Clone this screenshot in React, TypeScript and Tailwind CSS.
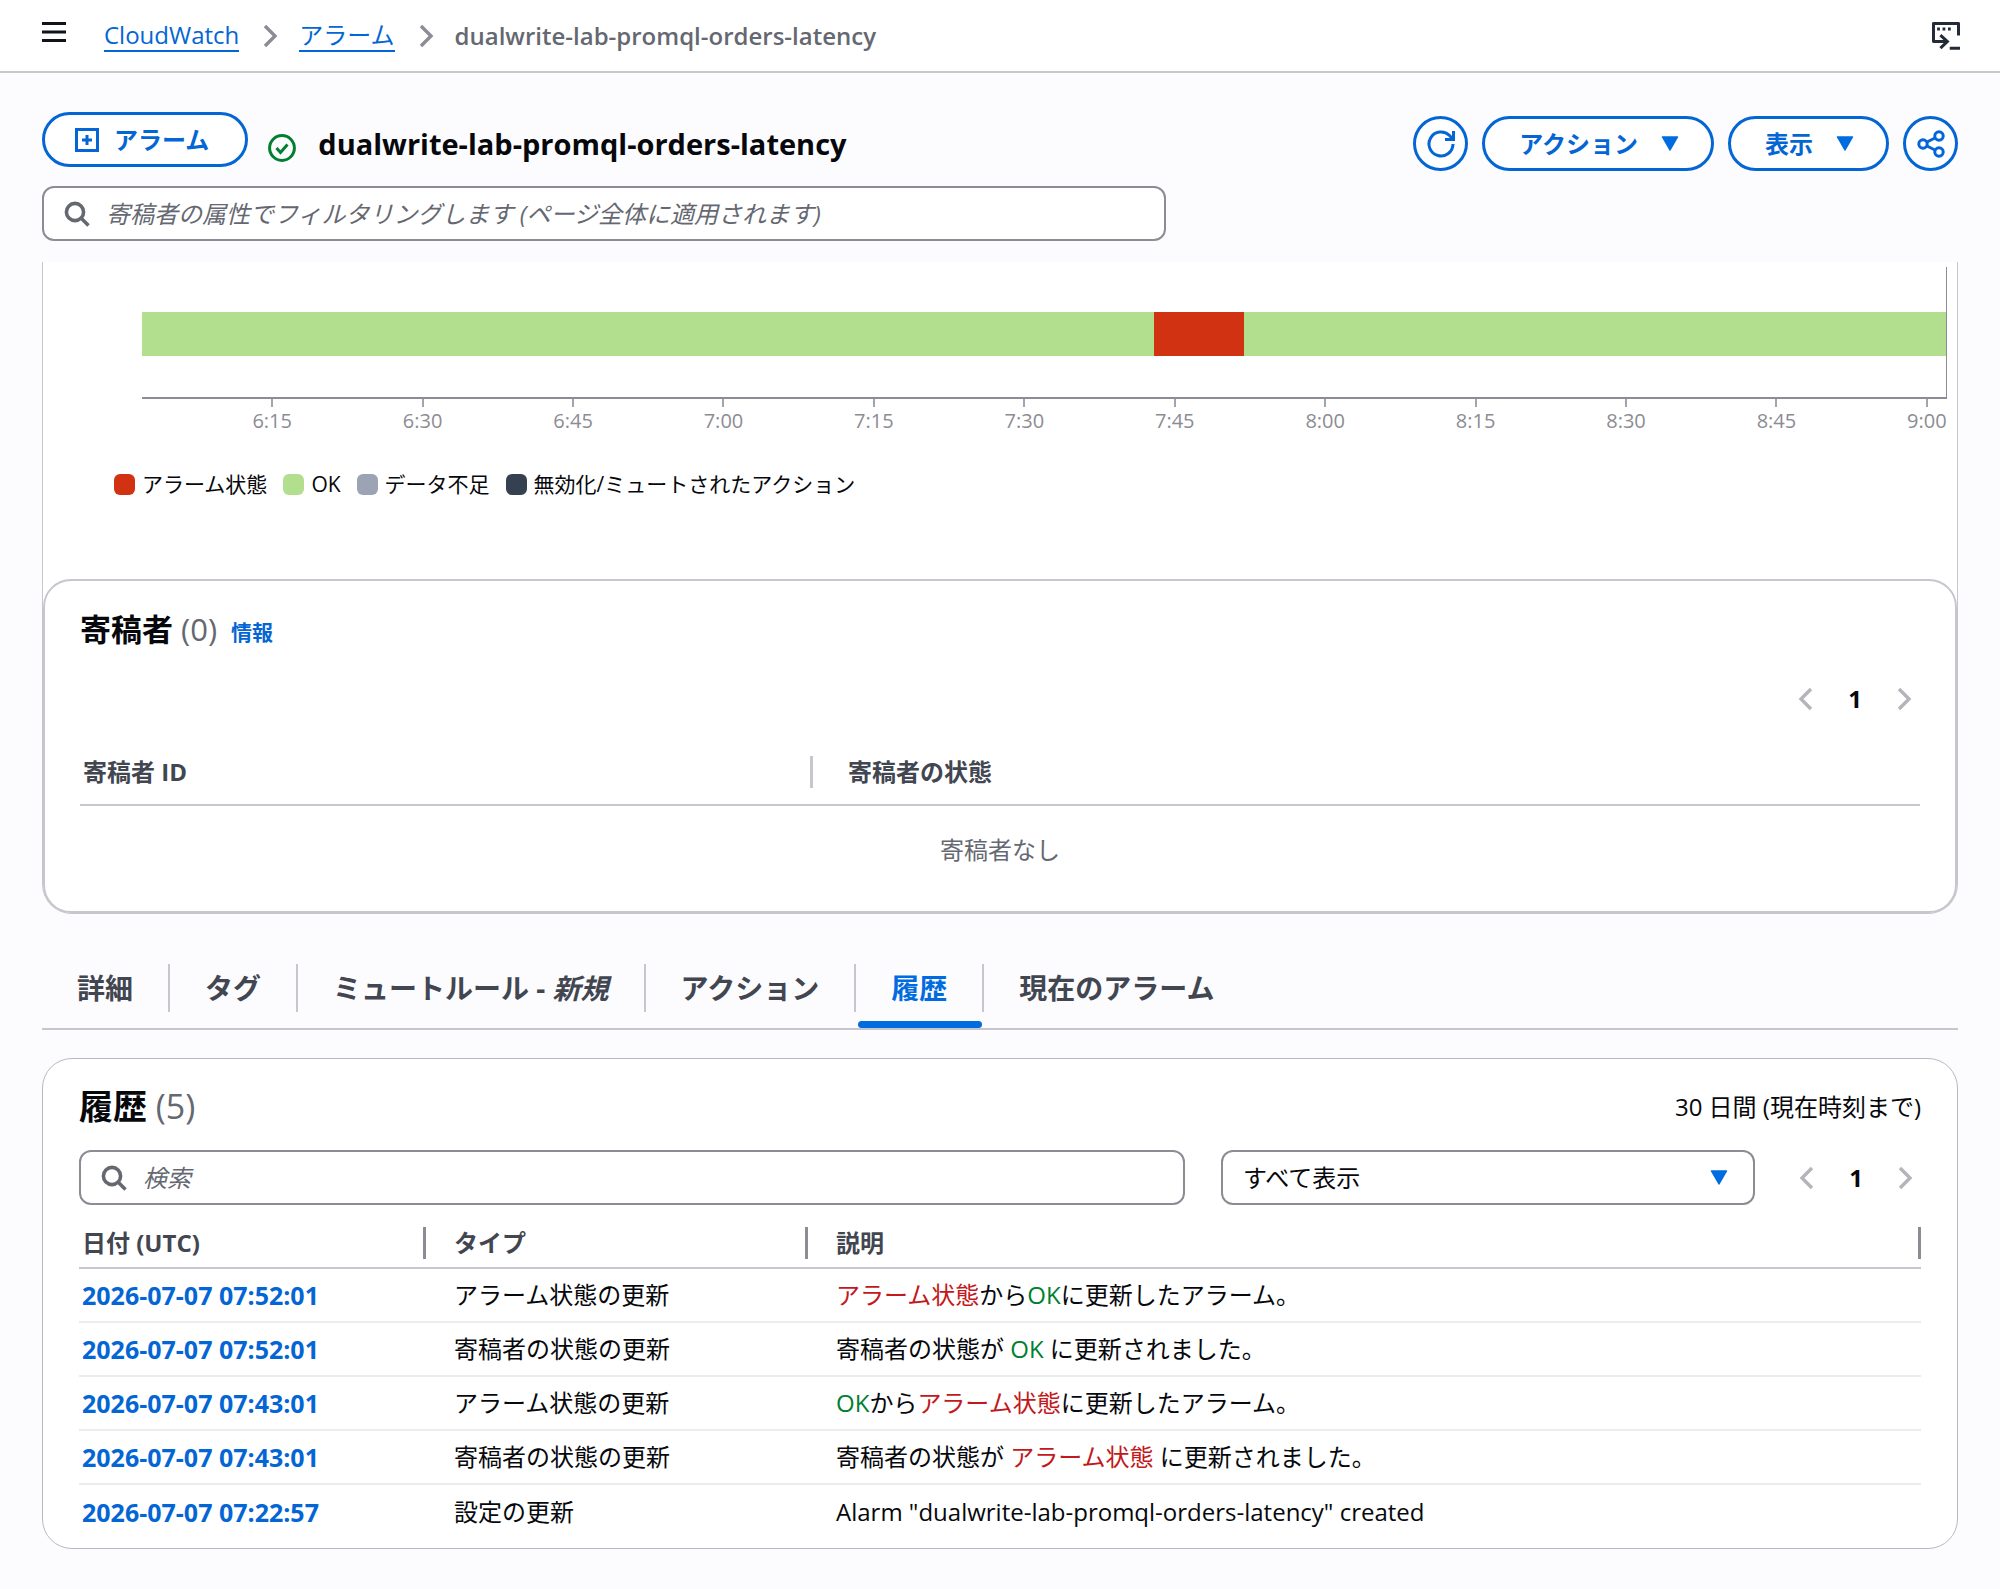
import type { ReactNode } from "react";

const STATES = [
  { label: "アラーム状態", swatch: "bg-[#d13212]" },
  { label: "OK", swatch: "bg-[#b2df8d]" },
  { label: "データ不足", swatch: "bg-[#9ba3b4]" },
  { label: "無効化/ミュートされたアクション", swatch: "bg-[#354150]" },
];

const TICKS = [
  "6:15",
  "6:30",
  "6:45",
  "7:00",
  "7:15",
  "7:30",
  "7:45",
  "8:00",
  "8:15",
  "8:30",
  "8:45",
  "9:00",
];

const Alarm = () => <span className="text-[#c2191c]">アラーム状態</span>;
const Ok = () => <span className="font-medium text-[#00802f]">OK</span>;

type HistoryRow = { date: string; type: string; description: ReactNode };

const HISTORY: HistoryRow[] = [
  {
    date: "2026-07-07 07:52:01",
    type: "アラーム状態の更新",
    description: (
      <>
        <Alarm />
        から
        <Ok />
        に更新したアラーム。
      </>
    ),
  },
  {
    date: "2026-07-07 07:52:01",
    type: "寄稿者の状態の更新",
    description: (
      <>
        寄稿者の状態が <Ok /> に更新されました。
      </>
    ),
  },
  {
    date: "2026-07-07 07:43:01",
    type: "アラーム状態の更新",
    description: (
      <>
        <Ok />
        から
        <Alarm />
        に更新したアラーム。
      </>
    ),
  },
  {
    date: "2026-07-07 07:43:01",
    type: "寄稿者の状態の更新",
    description: (
      <>
        寄稿者の状態が <Alarm /> に更新されました。
      </>
    ),
  },
  {
    date: "2026-07-07 07:22:57",
    type: "設定の更新",
    description: 'Alarm "dualwrite-lab-promql-orders-latency" created',
  },
];

function Chevron({ left = false, className }: { left?: boolean; className: string }) {
  return (
    <svg viewBox="0 0 16 24" fill="none" stroke="currentColor" strokeWidth="3.4" className={className}>
      <path d={left ? "M13 2 3 12l10 10" : "M3 2l10 10L3 22"} />
    </svg>
  );
}

function Caret() {
  return (
    <svg viewBox="0 0 18 15" className="h-[15px] w-[18px] fill-[#006ce0]">
      <path d="M1.500 1h15L9 14z" stroke="#006ce0" strokeWidth="1.500" strokeLinejoin="round" />
    </svg>
  );
}

function SearchIcon() {
  return (
    <svg viewBox="0 0 26 26" fill="none" stroke="#656871" strokeWidth="3.600" className="h-[26px] w-[26px] shrink-0">
      <circle cx="11" cy="11" r="8.600" />
      <path d="m17 17 7.500 7.500" />
    </svg>
  );
}

function Pagination() {
  return (
    <nav aria-label="ページ" className="flex items-center">
      <button type="button" aria-label="前へ" disabled>
        <Chevron left className="h-6 w-4 text-[#b4b4bb]" />
      </button>
      <button type="button" className="w-[82px] text-center font-bold">
        1
      </button>
      <button type="button" aria-label="次へ" disabled>
        <Chevron className="h-6 w-4 text-[#b4b4bb]" />
      </button>
    </nav>
  );
}

function TopBar() {
  return (
    <header className="flex h-[73px] items-center border-b-2 border-[#c6c6cd] bg-white pr-10 pl-[42px]">
      <button type="button" aria-label="メニュー" className="mb-2">
        <svg viewBox="0 0 24 22" stroke="#0f141a" strokeWidth="3" className="h-[22px] w-6">
          <path d="M0 2.500h24M0 11h24M0 19.500h24" />
        </svg>
      </button>
      <nav className="ml-[38px] flex flex-1 items-center">
        <a href="#" className="border-b-2 border-[#0466d4] leading-[30px] text-[#0466d4]">
          CloudWatch
        </a>
        <Chevron className="mr-[21px] ml-[23px] h-6 w-4 text-[#8c8c94]" />
        <a href="#" className="border-b-2 border-[#0466d4] leading-[30px] text-[#0466d4]">
          アラーム
        </a>
        <Chevron className="mr-[21px] ml-[23px] h-6 w-4 text-[#8c8c94]" />
        <span className="font-semibold text-[#656871]">dualwrite-lab-promql-orders-latency</span>
      </nav>
      <button type="button" aria-label="CloudShell">
        <svg viewBox="0 0 30 30" fill="none" stroke="#232b37" strokeWidth="3.200" className="h-7 w-7">
          <path d="M28.400 14.500V1.600H1.600v19.400H16" strokeLinejoin="round" />
          <path d="m9 14 7.500 7L9 28M19 28h11" />
          <path d="M5.500 7.500h3M11.300 7.500h3M17.100 7.500h3" />
        </svg>
      </button>
    </header>
  );
}

function PageHeader() {
  const pill =
    "flex h-[55px] items-center rounded-full border-3 border-[#0466d4] bg-white font-bold text-[#0466d4]";
  return (
    <div className="flex h-[61px] items-center justify-between">
      <div className="flex items-center">
        <button type="button" className={`${pill} mb-2 gap-[15px] pr-9 pl-[30px]`}>
          <svg viewBox="0 0 24 24" fill="none" stroke="#0466d4" strokeWidth="3" className="h-6 w-6">
            <path d="M1.500 1.500h21v21h-21zM12 7v10M7 12h10" />
          </svg>
          アラーム
        </button>
        <svg viewBox="0 0 28 28" fill="none" stroke="#00802f" strokeWidth="3" className="mt-2 ml-5 h-7 w-7">
          <circle cx="14" cy="14" r="12.400" />
          <path d="m8.500 14 4 4.500 7-8" />
        </svg>
        <h1 className="mt-0.5 ml-[22px] text-[29px] font-bold">dualwrite-lab-promql-orders-latency</h1>
      </div>
      <div className="flex items-center gap-[14px]">
        <button type="button" aria-label="更新" className={`${pill} w-[55px] justify-center`}>
          <svg viewBox="0 0 28 28" fill="none" stroke="#0466d4" strokeWidth="3" className="h-7 w-7">
            <path d="M26 14a12 12 0 1 1-3.500-8.500L26 9M26.500 1v8.500H18" />
          </svg>
        </button>
        <button type="button" className={`${pill} gap-[23px] pr-8 pl-[34px]`}>
          アクション
          <Caret />
        </button>
        <button type="button" className={`${pill} gap-[23px] pr-8 pl-[34px]`}>
          表示
          <Caret />
        </button>
        <button type="button" aria-label="共有" className={`${pill} w-[55px] justify-center`}>
          <svg viewBox="0 0 28 28" fill="none" stroke="#0466d4" strokeWidth="3" className="h-7 w-7">
            <circle cx="6" cy="14" r="4.200" />
            <circle cx="22" cy="6" r="4.200" />
            <circle cx="22" cy="22" r="4.200" />
            <path d="m10 12 8-4M10 16l8 4" />
          </svg>
        </button>
      </div>
    </div>
  );
}

// Minutes on the time line run from 6:02 to 9:02.
function Timeline() {
  return (
    <div className="pt-[5px] pr-[10px] pl-[99px]">
      <div className="border-r border-b-2 border-[#8c8c94] pt-[45px] pb-[41px]">
        <div className="flex h-11 bg-[#b2df8d]">
          <div className="w-[56.100%]" />
          <div className="w-[5%] bg-[#d13212]" />
        </div>
      </div>
      <div className="-mr-[55px] ml-[55px] flex">
        {TICKS.map((tick) => (
          <div key={tick} className="flex flex-1 flex-col items-center text-xl leading-[27px] text-[#8c8c94]">
            <span className="h-2 w-0.5 bg-[#a4a4ad]" />
            {tick}
          </div>
        ))}
      </div>
      <ul className="mt-[34px] -ml-7 flex gap-4 text-[21px] leading-8">
        {STATES.map((state) => (
          <li key={state.label} className="flex items-center gap-[7px]">
            <span className={`h-[21px] w-[21px] rounded-md ${state.swatch}`} />
            {state.label}
          </li>
        ))}
      </ul>
    </div>
  );
}

function Contributors() {
  return (
    <section className="mt-[79px] rounded-[28px] border-2 border-[#c6c6cd] px-[35px] pb-[30px]">
      <div className="flex h-[98px] items-center gap-2">
        <h2 className="text-[31px] font-bold">
          寄稿者 <span className="font-normal text-[#656871]">(0)</span>
        </h2>
        <a href="#" className="ml-1.5 pt-1 text-[21px] font-bold text-[#0466d4]">
          情報
        </a>
      </div>
      <div className="flex h-10 justify-end pr-2">
        <Pagination />
      </div>
      <table className="mt-5 w-full table-fixed">
        <thead>
          <tr className="h-[66px] border-b-2 border-[#c6c6cd] text-left text-[#424650]">
            <th className="w-[733px] font-bold">
              <div className="flex h-8 items-center border-r-3 border-[#c6c6cd] pl-[3px]">寄稿者 ID</div>
            </th>
            <th className="pl-[35px] font-bold">寄稿者の状態</th>
          </tr>
        </thead>
        <tbody>
          <tr>
            <td colSpan={2} className="h-[76px] pt-3 text-center text-[#656871]">
              寄稿者なし
            </td>
          </tr>
        </tbody>
      </table>
    </section>
  );
}

function Tabs() {
  const tabs: { id: string; label: ReactNode }[] = [
    { id: "details", label: "詳細" },
    { id: "tags", label: "タグ" },
    {
      id: "mute",
      label: (
        <>
          ミュートルール - <i>新規</i>
        </>
      ),
    },
    { id: "actions", label: "アクション" },
    { id: "history", label: "履歴" },
    { id: "current", label: "現在のアラーム" },
  ];
  return (
    <div role="tablist" className="mt-[50px] flex border-b-2 border-[#c6c6cd] text-[28px] font-bold text-[#424650]">
      {tabs.map((tab) => {
        const active = tab.id === "history";
        return (
          <button
            key={tab.id}
            type="button"
            role="tab"
            aria-selected={active}
            className={active ? "text-[#006ce0]" : ""}
          >
            <span
              className={`block h-12 px-[35px] leading-[48px] ${tab.id === "current" ? "" : "border-r-2 border-[#c6c6cd]"}`}
            >
              {tab.label}
            </span>
            <span className={`mx-0.5 mt-[9px] block h-[7px] rounded-sm ${active ? "bg-[#006ce0]" : ""}`} />
          </button>
        );
      })}
    </div>
  );
}

function HistoryPanel() {
  return (
    <section className="mt-7 rounded-[30px] border border-[#b8b8c0] bg-white px-9 pb-2.5">
      <div className="flex h-[91px] items-center justify-between pt-1">
        <h2 className="text-[34px] font-bold">
          履歴 <span className="font-normal text-[#656871]">(5)</span>
        </h2>
        <p>30 日間 (現在時刻まで)</p>
      </div>
      <div className="flex items-center">
        <label className="flex h-[55px] flex-1 items-center gap-4 rounded-xl border-2 border-[#8c8c94] bg-white px-5">
          <SearchIcon />
          <input
            type="text"
            aria-label="検索"
            placeholder="検索"
            className="w-full outline-none placeholder:text-[#656871] placeholder:italic"
          />
        </label>
        <div className="relative ml-9 w-[534px]">
          <select
            aria-label="タイプ"
            className="h-[55px] w-full appearance-none rounded-xl border-2 border-[#8c8c94] bg-white px-5"
          >
            <option>すべて表示</option>
          </select>
          <span className="pointer-events-none absolute top-5 right-[27px]">
            <Caret />
          </span>
        </div>
        <div className="ml-11 pr-2">
          <Pagination />
        </div>
      </div>
      <table className="mt-[14px] w-full table-fixed">
        <thead>
          <tr className="h-[49px] border-b-2 border-[#c6c6cd] text-left text-[#424650]">
            <th className="w-[347px] font-bold">
              <div className="flex h-8 items-center border-r-3 border-[#8c8c94] pl-[3px]">日付 (UTC)</div>
            </th>
            <th className="w-[382px] font-bold">
              <div className="flex h-8 items-center border-r-3 border-[#8c8c94] pl-7">タイプ</div>
            </th>
            <th className="font-bold">
              <div className="flex h-8 items-center border-r-3 border-[#8c8c94] pl-7">説明</div>
            </th>
          </tr>
        </thead>
        <tbody>
          {HISTORY.map((row, index) => (
            <tr key={index} className="h-[54px] border-b-2 border-[#ebebf0] last:border-b-0">
              <td className="pl-[3px] text-[25px] leading-9 font-bold">
                <a href="#" className="text-[#0466d4]">
                  {row.date}
                </a>
              </td>
              <td className="pl-7">{row.type}</td>
              <td className="pl-7">{row.description}</td>
            </tr>
          ))}
        </tbody>
      </table>
    </section>
  );
}

export default function App() {
  return (
    <div className="min-h-screen bg-[#fcfcff] font-['Open_Sans','Noto_Sans_CJK_JP',sans-serif] text-2xl text-[#06080c]">
      <TopBar />
      <main className="px-[42px] pt-10 pb-[38px]">
        <PageHeader />
        <label className="mt-3 flex h-[55px] w-[1124px] max-w-full items-center gap-4 rounded-xl border-2 border-[#8c8c94] bg-white px-5">
          <SearchIcon />
          <input
            type="text"
            aria-label="寄稿者の属性でフィルタリング"
            placeholder="寄稿者の属性でフィルタリングします (ページ全体に適用されます)"
            className="w-full outline-none placeholder:text-[#656871] placeholder:italic"
          />
        </label>
        <div className="mt-[21px] rounded-b-[30px] border border-t-0 border-[#c6c6cd] bg-white">
          <Timeline />
          <Contributors />
        </div>
        <Tabs />
        <HistoryPanel />
      </main>
    </div>
  );
}
